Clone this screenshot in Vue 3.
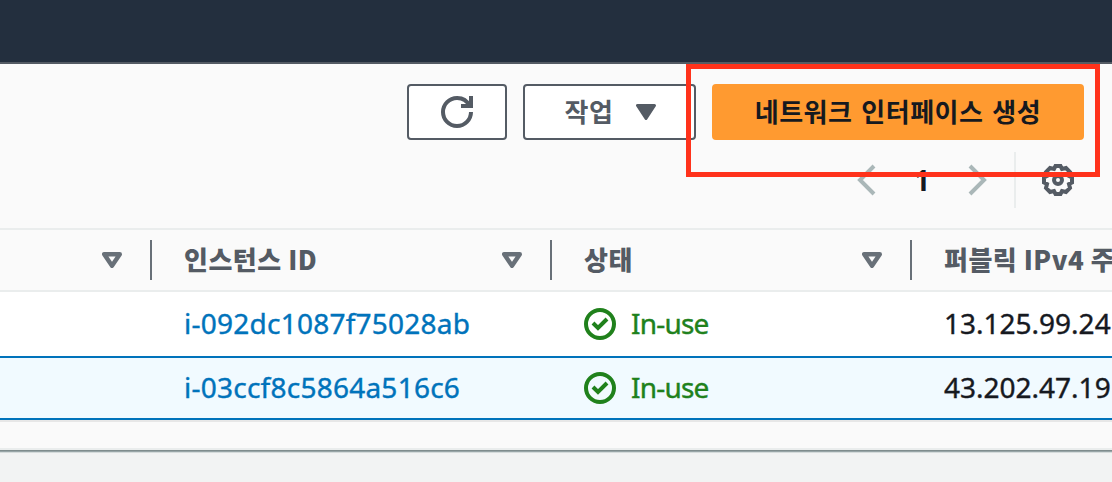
<script setup>
const rows = [
  { id: 'i-092dc1087f75028ab', ip: '13.125.99.24', cls: 'first' },
  { id: 'i-03ccf8c5864a516c6', ip: '43.202.47.19', cls: 'selected' },
]
</script>

<template>
  <div class="page">
    <div class="nav"></div>
    <div class="tools">
      <div class="actions">
        <button class="btn refresh">
          <svg width="32" height="32" viewBox="0 0 16 16"><path d="M10 5h5V0M15 8a7 7 0 0 1-14 0 7 7 0 0 1 7-7 6.900 6.900 0 0 1 6.300 4" /></svg>
        </button>
        <button class="btn menu">
          <span>작업</span>
          <svg class="caret" width="20" height="16" viewBox="0 0 20 16"><path d="M1.5 1.5h17L10 14.500z" /></svg>
        </button>
        <button class="btn primary"><span>네트워크 인터페이스 생성</span></button>
      </div>
      <div class="pager">
        <svg class="arrow" width="20" height="32" viewBox="0 0 20 32"><path d="M18 2 4 16l14 14" /></svg>
        <span class="num">1</span>
        <svg class="arrow" width="20" height="32" viewBox="0 0 20 32"><path d="M2 2l14 14L2 30" /></svg>
        <i class="sep"></i>
        <svg class="gear" width="32" height="32" viewBox="0 0 32 32">
          <path d="M13.500 2h5l1.500 3 4-1 4 4-1 4 3 1.500v5L27 20l1 4-4 4-4-1-1.500 3h-5L12 27l-4 1-4-4 1-4-3-1.500v-5L5 12 4 8l4-4 4 1z" />
          <circle cx="16" cy="16" r="4" />
        </svg>
      </div>
    </div>
    <div class="grid head">
      <div class="cell"><b></b><svg width="20" height="16" viewBox="0 0 20 16"><path d="M2.200 2.200h15.600L10 13.800z" /></svg></div>
      <div class="cell"><b>인스턴스 ID</b><svg width="20" height="16" viewBox="0 0 20 16"><path d="M2.200 2.200h15.600L10 13.800z" /></svg></div>
      <div class="cell"><b>상태</b><svg width="20" height="16" viewBox="0 0 20 16"><path d="M2.200 2.200h15.600L10 13.800z" /></svg></div>
      <div class="cell"><b>퍼블릭 IPv4 주</b></div>
    </div>
    <div v-for="r in rows" :key="r.id" class="grid row" :class="r.cls">
      <div class="cell"></div>
      <div class="cell"><a>{{ r.id }}</a></div>
      <div class="cell status">
        <svg width="32" height="32" viewBox="0 0 32 32"><circle cx="16" cy="16" r="14" /><path d="M9 15l5 5 9-9" /></svg>
        <span>In-use</span>
      </div>
      <div class="cell ip"><span>{{ r.ip }}</span></div>
    </div>
    <div class="foot"></div>
  </div>
</template>

<style>
body { margin: 0; overflow: hidden; }
</style>
<style scoped>
.page { position: relative; box-sizing: border-box; width: 1112px; height: 482px; overflow: hidden; background: #f2f3f3; font: 28px/36px "Noto Sans", "Noto Sans CJK KR", sans-serif; color: #16191f; }
.page::after { content: ""; position: absolute; left: 686px; top: 64px; width: 404px; height: 103px; border: 5px solid #ff321b; }
.nav { height: 62px; background: #232f3e; border-bottom: 2px solid #545b64; }
.tools { height: 164px; background: #fafafa; border-bottom: 2px solid #eaeded; }
.actions { display: flex; gap: 16px; justify-content: flex-end; padding: 20px 28px 0 0; }
.btn { box-sizing: border-box; height: 56px; border: 2px solid #545b64; border-radius: 4px; background: #fff; color: #545b64; font: 700 26px/36px "Noto Sans CJK KR", sans-serif; letter-spacing: .5px; word-spacing: 2.5px; padding: 0; display: flex; align-items: center; justify-content: center; white-space: nowrap; }
.btn span { padding-bottom: 2px; }
.refresh { width: 100px; }
.refresh path { fill: none; stroke: #545b64; stroke-width: 2; }
.menu { width: 173px; gap: 23px; padding-left: 2px; }
.caret path { fill: #545b64; stroke: #545b64; stroke-width: 3; stroke-linejoin: round; }
.primary { width: 372px; border-color: #ff9a30; background: #ff9a30; color: #16191f; }
.pager { display: flex; align-items: center; height: 56px; margin-top: 12px; padding-left: 856px; }
.arrow path { fill: none; stroke: #aab7b8; stroke-width: 4; }
.num { width: 92px; text-align: center; font-weight: 700; }
.sep { width: 2px; height: 56px; background: #eaeded; margin: 0 26px; }
.gear path, .gear circle { fill: none; stroke: #545b64; stroke-width: 4; }
.grid { display: grid; grid-template-columns: 152px 400px 360px 200px; box-sizing: border-box; overflow: hidden; }
.cell { display: flex; align-items: center; box-sizing: border-box; padding-left: 32px; white-space: nowrap; }
.head { height: 62px; background: #fafafa; border-bottom: 2px solid #eaeded; color: #545b64; font: 700 26px/36px "Noto Sans CJK KR", sans-serif; letter-spacing: .5px; align-items: center; }
.head .cell { height: 40px; justify-content: space-between; padding-right: 28px; border-right: 2px solid #687078; }
.head .cell:last-child { border: 0; padding-right: 0; }
.head b { padding-bottom: 2px; }
.head path { fill: none; stroke: #687078; stroke-width: 4.400; stroke-linejoin: round; }
.row { height: 64px; background: #fff; }
.row.selected { background: #f1faff; border-top: 2px solid #0073bb; border-bottom: 2px solid #0073bb; }
.row a, .row span { padding-bottom: 2px; -webkit-text-stroke: .4px currentColor; }
a { color: #0073bb; letter-spacing: .24px; }
.status { color: #20811c; gap: 15px; }
.status span { letter-spacing: -.8px; }
.status circle, .status path { fill: none; stroke: #20811c; stroke-width: 4; }
.foot { height: 26px; background: #fafafa; border-top: 2px solid #e7e7e7; border-bottom: 2px solid #eaeded; box-shadow: 0 1px 0 #7f8c8d, 0 2px 0 #98a5a7, 0 3px 0 #d5dbdb; }
</style>
